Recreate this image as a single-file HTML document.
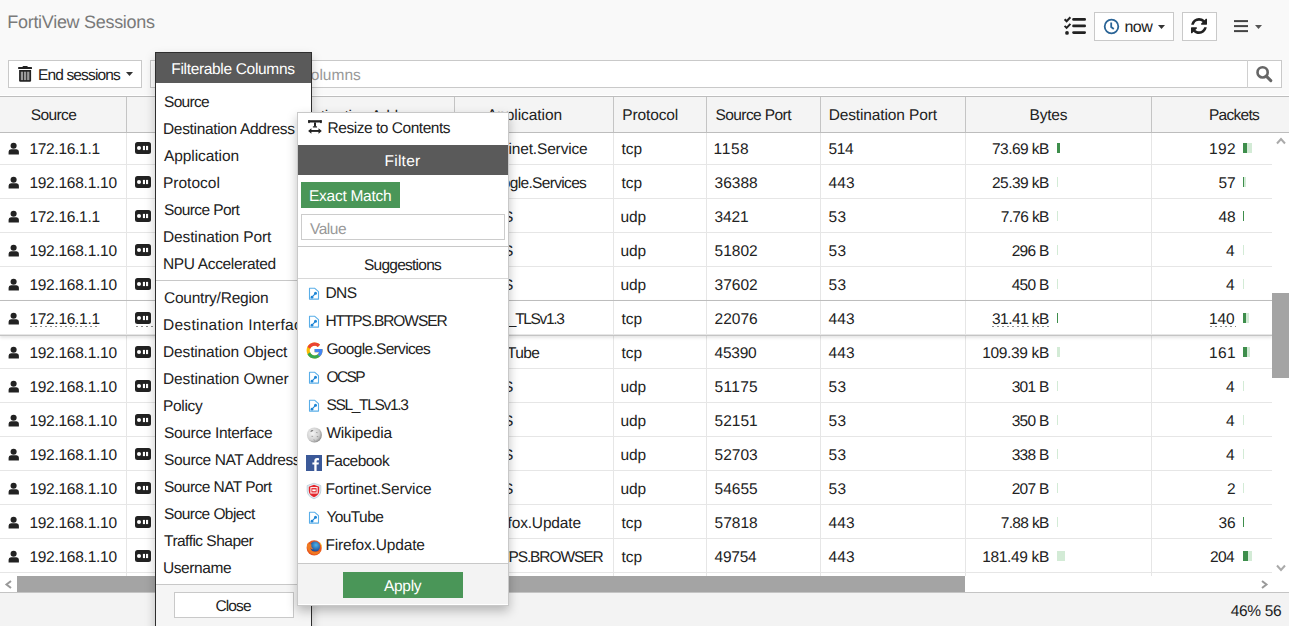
<!DOCTYPE html>
<html><head><meta charset="utf-8"><title>FortiView Sessions</title>
<style>
html,body{margin:0;padding:0;}
body{width:1289px;height:626px;overflow:hidden;position:relative;background:#f9f9f9;font-family:'Liberation Sans', sans-serif;text-rendering:geometricPrecision;}
.t{position:absolute;line-height:1;white-space:nowrap;}
.b{position:absolute;}
</style></head><body>
<div class="t" style="left:7.30px;top:13px;font-size:18px;color:#7a7a7a;letter-spacing:-0.296px;">FortiView Sessions</div>
<svg class="b" style="left:1060px;top:10px" width="30" height="28" viewBox="0 0 30 28">
<path d="M4.6 9.2 L6.6 11.2 L10.4 7.2" stroke="#222" stroke-width="2" fill="none"/>
<path d="M4.6 15.9 L6.6 17.9 L10.4 13.9" stroke="#222" stroke-width="2" fill="none"/>
<circle cx="7" cy="22.9" r="1.9" fill="#222"/>
<rect x="12.2" y="8.1" width="13.8" height="2.7" rx="1.3" fill="#222"/>
<rect x="12.2" y="14.6" width="13.8" height="2.7" rx="1.3" fill="#222"/>
<rect x="12.2" y="21.2" width="13.8" height="2.7" rx="1.3" fill="#222"/>
</svg>
<div class="b" style="left:1094px;top:12px;width:80px;height:29px;background:#fff;border:1px solid #c9c9c9;box-sizing:border-box"></div>
<svg class="b" style="left:1103.1px;top:17.8px" width="17" height="17" viewBox="0 0 17 17">
<circle cx="8.5" cy="8.5" r="6.8" stroke="#2a6496" stroke-width="1.8" fill="none"/>
<path d="M8.2 4.5 V9 L10.8 11" stroke="#2a6496" stroke-width="1.8" fill="none"/>
</svg>
<div class="t" style="left:1124.40px;top:20px;font-size:16px;color:#222;letter-spacing:-0.448px;">now</div>
<svg class="b" style="left:1158px;top:25px" width="8" height="5"><path d="M0 0 H7 L3.5 4Z" fill="#333"/></svg>
<div class="b" style="left:1182px;top:12px;width:35px;height:29px;background:#fff;border:1px solid #c9c9c9;box-sizing:border-box"></div>
<svg class="b" style="left:1191px;top:18px" width="16" height="16" viewBox="0 0 1536 1536">
<path fill="#222" d="M1511 928q0 5-1 7-64 268-268 434.5T764 1536q-146 0-282.5-55T238 1324l-129 129q-19 19-45 19t-45-19-19-45V960q0-26 19-45t45-19h448q26 0 45 19t19 45-19 45l-137 137q71 66 161 102t187 36q134 0 250-65t186-179q11-17 53-117 8-23 30-23h192q13 0 22.5 9.5t9.5 22.5zm25-800v448q0 26-19 45t-45 19h-448q-26 0-45-19t-19-45 19-45l138-138Q969 256 768 256q-134 0-250 65T332 500q-11 17-53 117-8 23-30 23H50q-13 0-22.5-9.5T18 608v-7q65-268 270-434.5T768 0q146 0 284 55.5T1297 212l130-129q19-19 45-19t45 19 19 45z"/>
</svg>
<svg class="b" style="left:1233px;top:20px" width="30" height="13" viewBox="0 0 30 13">
<rect x="1" y="0.1" width="14" height="2" fill="#444"/>
<rect x="1" y="5.1" width="14" height="2" fill="#444"/>
<rect x="1" y="10.1" width="14" height="2" fill="#444"/>
<path d="M22 5 H29 L25.5 9Z" fill="#555"/>
</svg>
<div class="b" style="left:8px;top:60px;width:134px;height:28px;background:#fff;border:1px solid #c9c9c9;box-sizing:border-box"></div>
<svg class="b" style="left:10px;top:60px" width="30" height="30" viewBox="0 0 30 30">
<rect x="8.1" y="7.1" width="13.9" height="1.9" rx="0.6" fill="#222"/>
<rect x="12.6" y="5.9" width="5.1" height="1.6" rx="0.7" fill="#222"/>
<path d="M9.1 10 H21.1 V20.6 Q21.1 21.8 19.9 21.8 H10.3 Q9.1 21.8 9.1 20.6 Z" fill="#222"/>
<rect x="10.8" y="11.7" width="2.3" height="8.4" fill="#9a9a9a"/>
<rect x="13.95" y="11.7" width="2.3" height="8.4" fill="#9a9a9a"/>
<rect x="17.1" y="11.7" width="2.3" height="8.4" fill="#9a9a9a"/>
</svg>
<div class="t" style="left:38.00px;top:68px;font-size:15.5px;color:#222;letter-spacing:-0.858px;">End sessions</div>
<svg class="b" style="left:126px;top:72px" width="8" height="5"><path d="M0 0 H7 L3.5 4Z" fill="#333"/></svg>
<div class="b" style="left:150px;top:60px;width:1132px;height:28px;background:#fff;border:1px solid #c9c9c9;box-sizing:border-box"></div>
<div class="b" style="left:1247px;top:60px;width:1px;height:28px;background:#d0d0d0"></div>
<div class="t" style="left:243.61px;top:68px;font-size:15.5px;color:#999;">Filter by columns</div>
<svg class="b" style="left:1255px;top:66px" width="18" height="17" viewBox="0 0 18 17">
<circle cx="7.6" cy="6.4" r="5.1" stroke="#666" stroke-width="2.6" fill="none"/>
<path d="M11.3 10.1 L15.8 14.6" stroke="#666" stroke-width="3" stroke-linecap="round"/>
</svg>
<div class="b" style="left:0px;top:95px;width:1289px;height:1px;background:#fff"></div>
<div class="b" style="left:0px;top:96px;width:1289px;height:37px;background:#f4f4f4;border-top:1px solid #bdbdbd;border-bottom:1px solid #bdbdbd;box-sizing:border-box"></div>
<div class="b" style="left:126px;top:97px;width:1px;height:35px;background:#c4c4c4"></div>
<div class="b" style="left:454px;top:97px;width:1px;height:35px;background:#c4c4c4"></div>
<div class="b" style="left:613px;top:97px;width:1px;height:35px;background:#c4c4c4"></div>
<div class="b" style="left:706px;top:97px;width:1px;height:35px;background:#c4c4c4"></div>
<div class="b" style="left:820px;top:97px;width:1px;height:35px;background:#c4c4c4"></div>
<div class="b" style="left:965px;top:97px;width:1px;height:35px;background:#c4c4c4"></div>
<div class="b" style="left:1151px;top:97px;width:1px;height:35px;background:#c4c4c4"></div>
<div class="t" style="left:30.70px;top:108px;font-size:15.5px;color:#222;letter-spacing:-0.598px;">Source</div>
<div class="t" style="left:294.20px;top:109px;font-size:15.5px;color:#222;letter-spacing:-0.331px;">Destination Address</div>
<div class="t" style="left:487.00px;top:108px;font-size:15.5px;color:#222;letter-spacing:-0.071px;">Application</div>
<div class="t" style="left:622.20px;top:108px;font-size:15.5px;color:#222;letter-spacing:-0.117px;">Protocol</div>
<div class="t" style="left:715.50px;top:108px;font-size:15.5px;color:#222;letter-spacing:-0.584px;">Source Port</div>
<div class="t" style="left:828.70px;top:108px;font-size:15.5px;color:#222;letter-spacing:-0.131px;">Destination Port</div>
<div class="t" style="left:1029.50px;top:108px;font-size:15.5px;color:#222;letter-spacing:-0.204px;">Bytes</div>
<div class="t" style="left:1209.00px;top:108px;font-size:15.5px;color:#222;letter-spacing:-0.731px;">Packets</div>
<div class="b" style="left:0px;top:133px;width:1272px;height:443px;background:#fff"></div>
<div class="b" style="left:0px;top:164px;width:1272px;height:1px;background:#e6e6e6"></div>
<svg class="b" style="left:8px;top:142px" width="12" height="13" viewBox="0 0 12 13">
<circle cx="5.6" cy="3.8" r="3.05" fill="#222"/><path d="M0.6 12.6 V9.8 Q0.6 7.3 3 7.3 H8.5 Q10.9 7.3 10.9 9.8 V12.6Z" fill="#222"/></svg>
<div class="t" style="left:29.40px;top:142px;font-size:15.5px;color:#222;letter-spacing:-0.293px;">172.16.1.1</div>
<svg class="b" style="left:135px;top:142px" width="16" height="12" viewBox="0 0 16 12">
<rect x="0" y="0" width="16" height="12" rx="2.5" fill="#222"/><circle cx="4" cy="6" r="2" fill="#fff"/><rect x="7.9" y="3.9" width="2.1" height="4.2" fill="#fff"/><rect x="11" y="3.9" width="2.1" height="4.2" fill="#fff"/></svg>
<div class="t" style="left:481.50px;top:142px;font-size:15.5px;color:#222;letter-spacing:-0.154px;">Fortinet.Service</div>
<div class="t" style="left:621.60px;top:142px;font-size:15.5px;color:#222;letter-spacing:-0.028px;">tcp</div>
<div class="t" style="left:713.60px;top:142px;font-size:15.5px;color:#222;letter-spacing:0.596px;">1158</div>
<div class="t" style="left:828.60px;top:142px;font-size:15.5px;color:#222;letter-spacing:-0.470px;">514</div>
<div class="t" style="left:992.00px;top:142px;font-size:15.5px;color:#222;letter-spacing:-0.549px;">73.69 kB</div>
<div class="t" style="left:1208.90px;top:142px;font-size:15.5px;color:#222;letter-spacing:0.430px;">192</div>
<div class="b" style="left:1057px;top:143px;width:3px;height:10px;background:#3e8e4c"></div>
<div class="b" style="left:1243px;top:143px;width:4px;height:10px;background:#3e8e4c"></div>
<div class="b" style="left:1247px;top:143px;width:5px;height:10px;background:#d3ebd6"></div>
<div class="b" style="left:0px;top:198px;width:1272px;height:1px;background:#e6e6e6"></div>
<svg class="b" style="left:8px;top:176px" width="12" height="13" viewBox="0 0 12 13">
<circle cx="5.6" cy="3.8" r="3.05" fill="#222"/><path d="M0.6 12.6 V9.8 Q0.6 7.3 3 7.3 H8.5 Q10.9 7.3 10.9 9.8 V12.6Z" fill="#222"/></svg>
<div class="t" style="left:29.40px;top:176px;font-size:15.5px;color:#222;letter-spacing:-0.262px;">192.168.1.10</div>
<svg class="b" style="left:135px;top:176px" width="16" height="12" viewBox="0 0 16 12">
<rect x="0" y="0" width="16" height="12" rx="2.5" fill="#222"/><circle cx="4" cy="6" r="2" fill="#fff"/><rect x="7.9" y="3.9" width="2.1" height="4.2" fill="#fff"/><rect x="11" y="3.9" width="2.1" height="4.2" fill="#fff"/></svg>
<div class="t" style="left:482.50px;top:176px;font-size:15.5px;color:#222;letter-spacing:-0.669px;">Google.Services</div>
<div class="t" style="left:621.60px;top:176px;font-size:15.5px;color:#222;letter-spacing:-0.028px;">tcp</div>
<div class="t" style="left:714.60px;top:176px;font-size:15.5px;color:#222;">36388</div>
<div class="t" style="left:828.60px;top:176px;font-size:15.5px;color:#222;letter-spacing:0.030px;">443</div>
<div class="t" style="left:992.00px;top:176px;font-size:15.5px;color:#222;letter-spacing:-0.549px;">25.39 kB</div>
<div class="t" style="left:1218.60px;top:176px;font-size:15.5px;color:#222;letter-spacing:-0.220px;">57</div>
<div class="b" style="left:1057px;top:177px;width:1px;height:10px;background:#d3ebd6"></div>
<div class="b" style="left:1243px;top:177px;width:1px;height:10px;background:#3e8e4c"></div>
<div class="b" style="left:1244px;top:177px;width:2px;height:10px;background:#d3ebd6"></div>
<div class="b" style="left:0px;top:232px;width:1272px;height:1px;background:#e6e6e6"></div>
<svg class="b" style="left:8px;top:210px" width="12" height="13" viewBox="0 0 12 13">
<circle cx="5.6" cy="3.8" r="3.05" fill="#222"/><path d="M0.6 12.6 V9.8 Q0.6 7.3 3 7.3 H8.5 Q10.9 7.3 10.9 9.8 V12.6Z" fill="#222"/></svg>
<div class="t" style="left:29.40px;top:210px;font-size:15.5px;color:#222;letter-spacing:-0.293px;">172.16.1.1</div>
<svg class="b" style="left:135px;top:210px" width="16" height="12" viewBox="0 0 16 12">
<rect x="0" y="0" width="16" height="12" rx="2.5" fill="#222"/><circle cx="4" cy="6" r="2" fill="#fff"/><rect x="7.9" y="3.9" width="2.1" height="4.2" fill="#fff"/><rect x="11" y="3.9" width="2.1" height="4.2" fill="#fff"/></svg>
<div class="t" style="left:481.50px;top:210px;font-size:15.5px;color:#222;letter-spacing:-0.494px;">DNS</div>
<div class="t" style="left:620.60px;top:210px;font-size:15.5px;color:#222;letter-spacing:-0.120px;">udp</div>
<div class="t" style="left:714.60px;top:210px;font-size:15.5px;color:#222;letter-spacing:-0.120px;">3421</div>
<div class="t" style="left:828.60px;top:210px;font-size:15.5px;color:#222;letter-spacing:0.380px;">53</div>
<div class="t" style="left:1000.70px;top:210px;font-size:15.5px;color:#222;letter-spacing:-0.654px;">7.76 kB</div>
<div class="t" style="left:1218.60px;top:210px;font-size:15.5px;color:#222;letter-spacing:-0.220px;">48</div>
<div class="b" style="left:1057px;top:211px;width:1px;height:10px;background:#d3ebd6"></div>
<div class="b" style="left:1243px;top:211px;width:1px;height:10px;background:#3e8e4c"></div>
<div class="b" style="left:0px;top:266px;width:1272px;height:1px;background:#e6e6e6"></div>
<svg class="b" style="left:8px;top:244px" width="12" height="13" viewBox="0 0 12 13">
<circle cx="5.6" cy="3.8" r="3.05" fill="#222"/><path d="M0.6 12.6 V9.8 Q0.6 7.3 3 7.3 H8.5 Q10.9 7.3 10.9 9.8 V12.6Z" fill="#222"/></svg>
<div class="t" style="left:29.40px;top:244px;font-size:15.5px;color:#222;letter-spacing:-0.262px;">192.168.1.10</div>
<svg class="b" style="left:135px;top:244px" width="16" height="12" viewBox="0 0 16 12">
<rect x="0" y="0" width="16" height="12" rx="2.5" fill="#222"/><circle cx="4" cy="6" r="2" fill="#fff"/><rect x="7.9" y="3.9" width="2.1" height="4.2" fill="#fff"/><rect x="11" y="3.9" width="2.1" height="4.2" fill="#fff"/></svg>
<div class="t" style="left:481.50px;top:244px;font-size:15.5px;color:#222;letter-spacing:-0.494px;">DNS</div>
<div class="t" style="left:620.60px;top:244px;font-size:15.5px;color:#222;letter-spacing:-0.120px;">udp</div>
<div class="t" style="left:714.60px;top:244px;font-size:15.5px;color:#222;">51802</div>
<div class="t" style="left:828.60px;top:244px;font-size:15.5px;color:#222;letter-spacing:0.380px;">53</div>
<div class="t" style="left:1011.70px;top:244px;font-size:15.5px;color:#222;letter-spacing:-0.717px;">296 B</div>
<div class="t" style="left:1226.00px;top:244px;font-size:15.5px;color:#222;">4</div>
<div class="b" style="left:1057px;top:245px;width:1px;height:10px;background:#d3ebd6"></div>
<div class="b" style="left:1243px;top:245px;width:1px;height:10px;background:#d3ebd6"></div>
<div class="b" style="left:0px;top:300px;width:1272px;height:1px;background:#e6e6e6"></div>
<svg class="b" style="left:8px;top:278px" width="12" height="13" viewBox="0 0 12 13">
<circle cx="5.6" cy="3.8" r="3.05" fill="#222"/><path d="M0.6 12.6 V9.8 Q0.6 7.3 3 7.3 H8.5 Q10.9 7.3 10.9 9.8 V12.6Z" fill="#222"/></svg>
<div class="t" style="left:29.40px;top:278px;font-size:15.5px;color:#222;letter-spacing:-0.262px;">192.168.1.10</div>
<svg class="b" style="left:135px;top:278px" width="16" height="12" viewBox="0 0 16 12">
<rect x="0" y="0" width="16" height="12" rx="2.5" fill="#222"/><circle cx="4" cy="6" r="2" fill="#fff"/><rect x="7.9" y="3.9" width="2.1" height="4.2" fill="#fff"/><rect x="11" y="3.9" width="2.1" height="4.2" fill="#fff"/></svg>
<div class="t" style="left:481.50px;top:278px;font-size:15.5px;color:#222;letter-spacing:-0.494px;">DNS</div>
<div class="t" style="left:620.60px;top:278px;font-size:15.5px;color:#222;letter-spacing:-0.120px;">udp</div>
<div class="t" style="left:714.60px;top:278px;font-size:15.5px;color:#222;">37602</div>
<div class="t" style="left:828.60px;top:278px;font-size:15.5px;color:#222;letter-spacing:0.380px;">53</div>
<div class="t" style="left:1011.70px;top:278px;font-size:15.5px;color:#222;letter-spacing:-0.717px;">450 B</div>
<div class="t" style="left:1226.00px;top:278px;font-size:15.5px;color:#222;">4</div>
<div class="b" style="left:1057px;top:279px;width:1px;height:10px;background:#d3ebd6"></div>
<div class="b" style="left:1243px;top:279px;width:1px;height:10px;background:#d3ebd6"></div>
<div class="b" style="left:0px;top:334px;width:1272px;height:1px;background:#e6e6e6"></div>
<svg class="b" style="left:8px;top:312px" width="12" height="13" viewBox="0 0 12 13">
<circle cx="5.6" cy="3.8" r="3.05" fill="#222"/><path d="M0.6 12.6 V9.8 Q0.6 7.3 3 7.3 H8.5 Q10.9 7.3 10.9 9.8 V12.6Z" fill="#222"/></svg>
<div class="t" style="left:29.40px;top:312px;font-size:15.5px;color:#222;letter-spacing:-0.293px;">172.16.1.1</div>
<svg class="b" style="left:135px;top:312px" width="16" height="12" viewBox="0 0 16 12">
<rect x="0" y="0" width="16" height="12" rx="2.5" fill="#222"/><circle cx="4" cy="6" r="2" fill="#fff"/><rect x="7.9" y="3.9" width="2.1" height="4.2" fill="#fff"/><rect x="11" y="3.9" width="2.1" height="4.2" fill="#fff"/></svg>
<div class="t" style="left:482.50px;top:312px;font-size:15.5px;color:#222;letter-spacing:-1.322px;">SSL_TLSv1.3</div>
<div class="t" style="left:621.60px;top:312px;font-size:15.5px;color:#222;letter-spacing:-0.028px;">tcp</div>
<div class="t" style="left:714.60px;top:312px;font-size:15.5px;color:#222;">22076</div>
<div class="t" style="left:828.60px;top:312px;font-size:15.5px;color:#222;letter-spacing:0.030px;">443</div>
<div class="t" style="left:992.00px;top:312px;font-size:15.5px;color:#222;letter-spacing:-0.549px;">31.41 kB</div>
<div class="t" style="left:1208.90px;top:312px;font-size:15.5px;color:#222;letter-spacing:-0.070px;">140</div>
<div class="b" style="left:30px;top:326px;width:70px;height:1px;background:repeating-linear-gradient(90deg,#8a8a8a 0 2px,transparent 2px 5px)"></div>
<div class="b" style="left:136px;top:326px;width:19px;height:1px;background:repeating-linear-gradient(90deg,#8a8a8a 0 2px,transparent 2px 5px)"></div>
<div class="b" style="left:992px;top:326px;width:58px;height:1px;background:repeating-linear-gradient(90deg,#8a8a8a 0 2px,transparent 2px 5px)"></div>
<div class="b" style="left:1210px;top:326px;width:26px;height:1px;background:repeating-linear-gradient(90deg,#8a8a8a 0 2px,transparent 2px 5px)"></div>
<div class="b" style="left:1057px;top:313px;width:1px;height:10px;background:#3e8e4c"></div>
<div class="b" style="left:1243px;top:313px;width:3px;height:10px;background:#3e8e4c"></div>
<div class="b" style="left:1246px;top:313px;width:3px;height:10px;background:#d3ebd6"></div>
<div class="b" style="left:0px;top:368px;width:1272px;height:1px;background:#e6e6e6"></div>
<svg class="b" style="left:8px;top:346px" width="12" height="13" viewBox="0 0 12 13">
<circle cx="5.6" cy="3.8" r="3.05" fill="#222"/><path d="M0.6 12.6 V9.8 Q0.6 7.3 3 7.3 H8.5 Q10.9 7.3 10.9 9.8 V12.6Z" fill="#222"/></svg>
<div class="t" style="left:29.40px;top:346px;font-size:15.5px;color:#222;letter-spacing:-0.262px;">192.168.1.10</div>
<svg class="b" style="left:135px;top:346px" width="16" height="12" viewBox="0 0 16 12">
<rect x="0" y="0" width="16" height="12" rx="2.5" fill="#222"/><circle cx="4" cy="6" r="2" fill="#fff"/><rect x="7.9" y="3.9" width="2.1" height="4.2" fill="#fff"/><rect x="11" y="3.9" width="2.1" height="4.2" fill="#fff"/></svg>
<div class="t" style="left:482.50px;top:346px;font-size:15.5px;color:#222;letter-spacing:-0.582px;">YouTube</div>
<div class="t" style="left:621.60px;top:346px;font-size:15.5px;color:#222;letter-spacing:-0.028px;">tcp</div>
<div class="t" style="left:714.60px;top:346px;font-size:15.5px;color:#222;letter-spacing:-0.245px;">45390</div>
<div class="t" style="left:828.60px;top:346px;font-size:15.5px;color:#222;letter-spacing:0.030px;">443</div>
<div class="t" style="left:982.30px;top:346px;font-size:15.5px;color:#222;letter-spacing:-0.346px;">109.39 kB</div>
<div class="t" style="left:1208.90px;top:346px;font-size:15.5px;color:#222;letter-spacing:0.430px;">161</div>
<div class="b" style="left:1057px;top:347px;width:3px;height:10px;background:#d3ebd6"></div>
<div class="b" style="left:1243px;top:347px;width:4px;height:10px;background:#3e8e4c"></div>
<div class="b" style="left:1247px;top:347px;width:3px;height:10px;background:#d3ebd6"></div>
<div class="b" style="left:0px;top:402px;width:1272px;height:1px;background:#e6e6e6"></div>
<svg class="b" style="left:8px;top:380px" width="12" height="13" viewBox="0 0 12 13">
<circle cx="5.6" cy="3.8" r="3.05" fill="#222"/><path d="M0.6 12.6 V9.8 Q0.6 7.3 3 7.3 H8.5 Q10.9 7.3 10.9 9.8 V12.6Z" fill="#222"/></svg>
<div class="t" style="left:29.40px;top:380px;font-size:15.5px;color:#222;letter-spacing:-0.262px;">192.168.1.10</div>
<svg class="b" style="left:135px;top:380px" width="16" height="12" viewBox="0 0 16 12">
<rect x="0" y="0" width="16" height="12" rx="2.5" fill="#222"/><circle cx="4" cy="6" r="2" fill="#fff"/><rect x="7.9" y="3.9" width="2.1" height="4.2" fill="#fff"/><rect x="11" y="3.9" width="2.1" height="4.2" fill="#fff"/></svg>
<div class="t" style="left:481.50px;top:380px;font-size:15.5px;color:#222;letter-spacing:-0.494px;">DNS</div>
<div class="t" style="left:620.60px;top:380px;font-size:15.5px;color:#222;letter-spacing:-0.120px;">udp</div>
<div class="t" style="left:714.60px;top:380px;font-size:15.5px;color:#222;letter-spacing:0.292px;">51175</div>
<div class="t" style="left:828.60px;top:380px;font-size:15.5px;color:#222;letter-spacing:0.380px;">53</div>
<div class="t" style="left:1011.70px;top:380px;font-size:15.5px;color:#222;letter-spacing:-0.717px;">301 B</div>
<div class="t" style="left:1226.00px;top:380px;font-size:15.5px;color:#222;">4</div>
<div class="b" style="left:1057px;top:381px;width:1px;height:10px;background:#d3ebd6"></div>
<div class="b" style="left:1243px;top:381px;width:1px;height:10px;background:#d3ebd6"></div>
<div class="b" style="left:0px;top:436px;width:1272px;height:1px;background:#e6e6e6"></div>
<svg class="b" style="left:8px;top:414px" width="12" height="13" viewBox="0 0 12 13">
<circle cx="5.6" cy="3.8" r="3.05" fill="#222"/><path d="M0.6 12.6 V9.8 Q0.6 7.3 3 7.3 H8.5 Q10.9 7.3 10.9 9.8 V12.6Z" fill="#222"/></svg>
<div class="t" style="left:29.40px;top:414px;font-size:15.5px;color:#222;letter-spacing:-0.262px;">192.168.1.10</div>
<svg class="b" style="left:135px;top:414px" width="16" height="12" viewBox="0 0 16 12">
<rect x="0" y="0" width="16" height="12" rx="2.5" fill="#222"/><circle cx="4" cy="6" r="2" fill="#fff"/><rect x="7.9" y="3.9" width="2.1" height="4.2" fill="#fff"/><rect x="11" y="3.9" width="2.1" height="4.2" fill="#fff"/></svg>
<div class="t" style="left:481.50px;top:414px;font-size:15.5px;color:#222;letter-spacing:-0.494px;">DNS</div>
<div class="t" style="left:620.60px;top:414px;font-size:15.5px;color:#222;letter-spacing:-0.120px;">udp</div>
<div class="t" style="left:714.60px;top:414px;font-size:15.5px;color:#222;">52151</div>
<div class="t" style="left:828.60px;top:414px;font-size:15.5px;color:#222;letter-spacing:0.380px;">53</div>
<div class="t" style="left:1011.70px;top:414px;font-size:15.5px;color:#222;letter-spacing:-0.717px;">350 B</div>
<div class="t" style="left:1226.00px;top:414px;font-size:15.5px;color:#222;">4</div>
<div class="b" style="left:1057px;top:415px;width:1px;height:10px;background:#d3ebd6"></div>
<div class="b" style="left:1243px;top:415px;width:1px;height:10px;background:#d3ebd6"></div>
<div class="b" style="left:0px;top:470px;width:1272px;height:1px;background:#e6e6e6"></div>
<svg class="b" style="left:8px;top:448px" width="12" height="13" viewBox="0 0 12 13">
<circle cx="5.6" cy="3.8" r="3.05" fill="#222"/><path d="M0.6 12.6 V9.8 Q0.6 7.3 3 7.3 H8.5 Q10.9 7.3 10.9 9.8 V12.6Z" fill="#222"/></svg>
<div class="t" style="left:29.40px;top:448px;font-size:15.5px;color:#222;letter-spacing:-0.262px;">192.168.1.10</div>
<svg class="b" style="left:135px;top:448px" width="16" height="12" viewBox="0 0 16 12">
<rect x="0" y="0" width="16" height="12" rx="2.5" fill="#222"/><circle cx="4" cy="6" r="2" fill="#fff"/><rect x="7.9" y="3.9" width="2.1" height="4.2" fill="#fff"/><rect x="11" y="3.9" width="2.1" height="4.2" fill="#fff"/></svg>
<div class="t" style="left:481.50px;top:448px;font-size:15.5px;color:#222;letter-spacing:-0.494px;">DNS</div>
<div class="t" style="left:620.60px;top:448px;font-size:15.5px;color:#222;letter-spacing:-0.120px;">udp</div>
<div class="t" style="left:714.60px;top:448px;font-size:15.5px;color:#222;">52703</div>
<div class="t" style="left:828.60px;top:448px;font-size:15.5px;color:#222;letter-spacing:0.380px;">53</div>
<div class="t" style="left:1011.70px;top:448px;font-size:15.5px;color:#222;letter-spacing:-0.717px;">338 B</div>
<div class="t" style="left:1226.00px;top:448px;font-size:15.5px;color:#222;">4</div>
<div class="b" style="left:1057px;top:449px;width:1px;height:10px;background:#d3ebd6"></div>
<div class="b" style="left:1243px;top:449px;width:1px;height:10px;background:#d3ebd6"></div>
<div class="b" style="left:0px;top:504px;width:1272px;height:1px;background:#e6e6e6"></div>
<svg class="b" style="left:8px;top:482px" width="12" height="13" viewBox="0 0 12 13">
<circle cx="5.6" cy="3.8" r="3.05" fill="#222"/><path d="M0.6 12.6 V9.8 Q0.6 7.3 3 7.3 H8.5 Q10.9 7.3 10.9 9.8 V12.6Z" fill="#222"/></svg>
<div class="t" style="left:29.40px;top:482px;font-size:15.5px;color:#222;letter-spacing:-0.262px;">192.168.1.10</div>
<svg class="b" style="left:135px;top:482px" width="16" height="12" viewBox="0 0 16 12">
<rect x="0" y="0" width="16" height="12" rx="2.5" fill="#222"/><circle cx="4" cy="6" r="2" fill="#fff"/><rect x="7.9" y="3.9" width="2.1" height="4.2" fill="#fff"/><rect x="11" y="3.9" width="2.1" height="4.2" fill="#fff"/></svg>
<div class="t" style="left:481.50px;top:482px;font-size:15.5px;color:#222;letter-spacing:-0.494px;">DNS</div>
<div class="t" style="left:620.60px;top:482px;font-size:15.5px;color:#222;letter-spacing:-0.120px;">udp</div>
<div class="t" style="left:714.60px;top:482px;font-size:15.5px;color:#222;">54655</div>
<div class="t" style="left:828.60px;top:482px;font-size:15.5px;color:#222;letter-spacing:0.380px;">53</div>
<div class="t" style="left:1011.70px;top:482px;font-size:15.5px;color:#222;letter-spacing:-0.717px;">207 B</div>
<div class="t" style="left:1227.00px;top:482px;font-size:15.5px;color:#222;">2</div>
<div class="b" style="left:1057px;top:483px;width:1px;height:10px;background:#d3ebd6"></div>
<div class="b" style="left:1243px;top:483px;width:1px;height:10px;background:#d3ebd6"></div>
<div class="b" style="left:0px;top:538px;width:1272px;height:1px;background:#e6e6e6"></div>
<svg class="b" style="left:8px;top:516px" width="12" height="13" viewBox="0 0 12 13">
<circle cx="5.6" cy="3.8" r="3.05" fill="#222"/><path d="M0.6 12.6 V9.8 Q0.6 7.3 3 7.3 H8.5 Q10.9 7.3 10.9 9.8 V12.6Z" fill="#222"/></svg>
<div class="t" style="left:29.40px;top:516px;font-size:15.5px;color:#222;letter-spacing:-0.262px;">192.168.1.10</div>
<svg class="b" style="left:135px;top:516px" width="16" height="12" viewBox="0 0 16 12">
<rect x="0" y="0" width="16" height="12" rx="2.5" fill="#222"/><circle cx="4" cy="6" r="2" fill="#fff"/><rect x="7.9" y="3.9" width="2.1" height="4.2" fill="#fff"/><rect x="11" y="3.9" width="2.1" height="4.2" fill="#fff"/></svg>
<div class="t" style="left:481.50px;top:516px;font-size:15.5px;color:#222;letter-spacing:-0.164px;">Firefox.Update</div>
<div class="t" style="left:621.60px;top:516px;font-size:15.5px;color:#222;letter-spacing:-0.028px;">tcp</div>
<div class="t" style="left:714.60px;top:516px;font-size:15.5px;color:#222;">57818</div>
<div class="t" style="left:828.60px;top:516px;font-size:15.5px;color:#222;letter-spacing:0.030px;">443</div>
<div class="t" style="left:1000.70px;top:516px;font-size:15.5px;color:#222;letter-spacing:-0.654px;">7.88 kB</div>
<div class="t" style="left:1218.60px;top:516px;font-size:15.5px;color:#222;letter-spacing:-0.220px;">36</div>
<div class="b" style="left:1057px;top:517px;width:1px;height:10px;background:#d3ebd6"></div>
<div class="b" style="left:1243px;top:517px;width:1px;height:10px;background:#3e8e4c"></div>
<div class="b" style="left:0px;top:572px;width:1272px;height:1px;background:#e6e6e6"></div>
<svg class="b" style="left:8px;top:550px" width="12" height="13" viewBox="0 0 12 13">
<circle cx="5.6" cy="3.8" r="3.05" fill="#222"/><path d="M0.6 12.6 V9.8 Q0.6 7.3 3 7.3 H8.5 Q10.9 7.3 10.9 9.8 V12.6Z" fill="#222"/></svg>
<div class="t" style="left:29.40px;top:550px;font-size:15.5px;color:#222;letter-spacing:-0.262px;">192.168.1.10</div>
<svg class="b" style="left:135px;top:550px" width="16" height="12" viewBox="0 0 16 12">
<rect x="0" y="0" width="16" height="12" rx="2.5" fill="#222"/><circle cx="4" cy="6" r="2" fill="#fff"/><rect x="7.9" y="3.9" width="2.1" height="4.2" fill="#fff"/><rect x="11" y="3.9" width="2.1" height="4.2" fill="#fff"/></svg>
<div class="t" style="left:481.50px;top:550px;font-size:15.5px;color:#222;letter-spacing:-1.084px;">HTTPS.BROWSER</div>
<div class="t" style="left:621.60px;top:550px;font-size:15.5px;color:#222;letter-spacing:-0.028px;">tcp</div>
<div class="t" style="left:714.60px;top:550px;font-size:15.5px;color:#222;letter-spacing:-0.245px;">49754</div>
<div class="t" style="left:828.60px;top:550px;font-size:15.5px;color:#222;letter-spacing:0.030px;">443</div>
<div class="t" style="left:982.30px;top:550px;font-size:15.5px;color:#222;letter-spacing:-0.346px;">181.49 kB</div>
<div class="t" style="left:1209.90px;top:550px;font-size:15.5px;color:#222;letter-spacing:-0.570px;">204</div>
<div class="b" style="left:1057px;top:551px;width:8px;height:10px;background:#d3ebd6"></div>
<div class="b" style="left:1243px;top:551px;width:5px;height:10px;background:#3e8e4c"></div>
<div class="b" style="left:1248px;top:551px;width:4px;height:10px;background:#d3ebd6"></div>
<div class="b" style="left:126px;top:133px;width:1px;height:443px;background:#e6e6e6"></div>
<div class="b" style="left:454px;top:133px;width:1px;height:443px;background:#e6e6e6"></div>
<div class="b" style="left:613px;top:133px;width:1px;height:443px;background:#e6e6e6"></div>
<div class="b" style="left:706px;top:133px;width:1px;height:443px;background:#e6e6e6"></div>
<div class="b" style="left:820px;top:133px;width:1px;height:443px;background:#e6e6e6"></div>
<div class="b" style="left:965px;top:133px;width:1px;height:443px;background:#e6e6e6"></div>
<div class="b" style="left:1151px;top:133px;width:1px;height:443px;background:#e6e6e6"></div>
<div class="b" style="left:0px;top:300px;width:1272px;height:36px;border-top:1px solid #bdbdbd;border-bottom:1px solid #c4c4c4;box-shadow:0 2px 3px rgba(0,0,0,0.10);box-sizing:border-box"></div>
<div class="b" style="left:0px;top:576px;width:1272px;height:16px;background:#fff"></div>
<div class="b" style="left:17px;top:576px;width:948px;height:16px;background:#a4a4a4"></div>
<svg class="b" style="left:4px;top:580px" width="9" height="9"><path d="M7 1 L2.5 4.5 L7 8" stroke="#999" stroke-width="2" fill="none"/></svg>
<svg class="b" style="left:1260px;top:580px" width="9" height="9"><path d="M2 1 L6.5 4.5 L2 8" stroke="#999" stroke-width="2" fill="none"/></svg>
<div class="b" style="left:1272px;top:133px;width:17px;height:459px;background:#fff"></div>
<div class="b" style="left:1272px;top:293px;width:17px;height:85px;background:#a4a4a4"></div>
<svg class="b" style="left:1276px;top:137px" width="10" height="8"><path d="M1 6.5 L5 2 L9 6.5" stroke="#aaa" stroke-width="2" fill="none"/></svg>
<svg class="b" style="left:1276px;top:564px" width="10" height="8"><path d="M1 1.5 L5 6 L9 1.5" stroke="#aaa" stroke-width="2" fill="none"/></svg>
<div class="b" style="left:0px;top:592px;width:1289px;height:34px;background:#f3f3f3;border-top:1px solid #c4c4c4;box-sizing:border-box"></div>
<div class="t" style="left:1230.70px;top:604px;font-size:15.5px;color:#222;letter-spacing:-0.330px;">46% 56</div>
<div class="b" style="left:155px;top:52px;width:157px;height:590px;background:#fff;border:1px solid #2e2e2e;box-sizing:border-box;box-shadow:0 5px 10px rgba(0,0,0,0.22)"></div>
<div class="b" style="left:156px;top:53px;width:155px;height:30px;background:#5a5a5a"></div>
<div class="t" style="left:171.30px;top:62px;font-size:15.5px;color:#fff;letter-spacing:-0.327px;">Filterable Columns</div>
<div class="t" style="left:164.00px;top:95px;font-size:15.5px;color:#222;letter-spacing:-0.698px;">Source</div>
<div class="t" style="left:163.00px;top:122px;font-size:15.5px;color:#222;letter-spacing:-0.331px;">Destination Address</div>
<div class="t" style="left:164.00px;top:149px;font-size:15.5px;color:#222;letter-spacing:-0.071px;">Application</div>
<div class="t" style="left:163.00px;top:176px;font-size:15.5px;color:#222;">Protocol</div>
<div class="t" style="left:164.00px;top:203px;font-size:15.5px;color:#222;letter-spacing:-0.594px;">Source Port</div>
<div class="t" style="left:163.00px;top:230px;font-size:15.5px;color:#222;letter-spacing:-0.131px;">Destination Port</div>
<div class="t" style="left:163.00px;top:257px;font-size:15.5px;color:#222;letter-spacing:-0.347px;">NPU Accelerated</div>
<div class="b" style="left:156px;top:280px;width:155px;height:1px;background:#c8c8c8"></div>
<div class="t" style="left:164.00px;top:291.4px;font-size:15.5px;color:#222;letter-spacing:-0.237px;">Country/Region</div>
<div class="t" style="left:163.00px;top:318.4px;font-size:15.5px;color:#222;letter-spacing:0.273px;">Destination Interface</div>
<div class="t" style="left:163.00px;top:345.4px;font-size:15.5px;color:#222;letter-spacing:-0.138px;">Destination Object</div>
<div class="t" style="left:163.00px;top:372.4px;font-size:15.5px;color:#222;letter-spacing:-0.109px;">Destination Owner</div>
<div class="t" style="left:163.00px;top:399.4px;font-size:15.5px;color:#222;letter-spacing:-0.319px;">Policy</div>
<div class="t" style="left:164.00px;top:426.4px;font-size:15.5px;color:#222;letter-spacing:-0.341px;">Source Interface</div>
<div class="t" style="left:164.00px;top:453.4px;font-size:15.5px;color:#222;letter-spacing:-0.393px;">Source NAT Address</div>
<div class="t" style="left:164.00px;top:480.4px;font-size:15.5px;color:#222;letter-spacing:-0.550px;">Source NAT Port</div>
<div class="t" style="left:164.00px;top:507.4px;font-size:15.5px;color:#222;letter-spacing:-0.576px;">Source Object</div>
<div class="t" style="left:164.00px;top:534.4px;font-size:15.5px;color:#222;letter-spacing:-0.517px;">Traffic Shaper</div>
<div class="t" style="left:163.00px;top:561.4px;font-size:15.5px;color:#222;letter-spacing:-0.411px;">Username</div>
<div class="b" style="left:156px;top:584px;width:155px;height:42px;background:#f5f5f5;border-top:1px solid #c8c8c8;box-sizing:border-box"></div>
<div class="b" style="left:174px;top:592px;width:120px;height:26px;background:#fff;border:1px solid #c9c9c9;box-sizing:border-box"></div>
<div class="t" style="left:215.40px;top:599px;font-size:15.5px;color:#222;letter-spacing:-0.852px;">Close</div>
<div class="b" style="left:297px;top:112px;width:212px;height:494px;background:#fff;border:1px solid #c8c8c8;box-sizing:border-box;box-shadow:0 5px 10px rgba(0,0,0,0.25)"></div>
<svg class="b" style="left:302px;top:114px" width="30" height="26" viewBox="0 0 30 26">
<rect x="6.2" y="6.2" width="13.5" height="2.3" fill="#222"/>
<rect x="6.2" y="6.2" width="1.6" height="2.9" fill="#222"/>
<rect x="18.1" y="6.2" width="1.6" height="2.9" fill="#222"/>
<rect x="12" y="8.4" width="2" height="4.2" fill="#222"/>
<rect x="10.8" y="12.2" width="4.3" height="1.4" rx="0.6" fill="#222"/>
<rect x="8" y="16" width="10" height="1.9" fill="#222"/>
<path d="M6.1 16.95 L9.4 14.2 V19.7Z M19.8 16.95 L16.5 14.2 V19.7Z" fill="#222"/>
</svg>
<div class="t" style="left:327.50px;top:121px;font-size:15.5px;color:#222;letter-spacing:-0.465px;">Resize to Contents</div>
<div class="b" style="left:298px;top:145px;width:210px;height:30px;background:#5a5a5a"></div>
<div class="t" style="left:384.50px;top:154px;font-size:15.5px;color:#fff;letter-spacing:0.244px;">Filter</div>
<div class="b" style="left:301px;top:182px;width:99px;height:26px;background:#4a9658"></div>
<div class="t" style="left:309.00px;top:189px;font-size:15.5px;color:#fff;letter-spacing:-0.266px;">Exact Match</div>
<div class="b" style="left:301px;top:214px;width:204px;height:26px;background:#fff;border:1px solid #ccc;box-sizing:border-box"></div>
<div class="t" style="left:310.00px;top:221.5px;font-size:15.5px;color:#999;letter-spacing:-0.468px;">Value</div>
<div class="b" style="left:298px;top:246px;width:210px;height:1px;background:#c8c8c8"></div>
<div class="t" style="left:364.00px;top:258px;font-size:15.5px;color:#222;letter-spacing:-0.756px;">Suggestions</div>
<div class="b" style="left:298px;top:278px;width:210px;height:1px;background:#d8d8d8"></div>
<div class="t" style="left:325.40px;top:286px;font-size:15.5px;color:#222;letter-spacing:-0.494px;">DNS</div>
<svg class="b" style="left:304px;top:285px" width="20" height="20" viewBox="0 0 20 20">
<path d="M5.5 3.3 H10.8 L14.5 6.6 V14.1 H5.5Z" fill="#fff" stroke="#5aaee8" stroke-width="1.1" stroke-linejoin="round"/>
<path d="M8 12.2 L11.5 8.4" stroke="#1f86d6" stroke-width="1.1"/>
<circle cx="8" cy="12.2" r="1.35" fill="#1f86d6"/><circle cx="11.5" cy="8.3" r="1.5" fill="#1f86d6"/>
</svg>
<div class="t" style="left:325.40px;top:314px;font-size:15.5px;color:#222;letter-spacing:-1.084px;">HTTPS.BROWSER</div>
<svg class="b" style="left:304px;top:313px" width="20" height="20" viewBox="0 0 20 20">
<path d="M5.5 3.3 H10.8 L14.5 6.6 V14.1 H5.5Z" fill="#fff" stroke="#5aaee8" stroke-width="1.1" stroke-linejoin="round"/>
<path d="M8 12.2 L11.5 8.4" stroke="#1f86d6" stroke-width="1.1"/>
<circle cx="8" cy="12.2" r="1.35" fill="#1f86d6"/><circle cx="11.5" cy="8.3" r="1.5" fill="#1f86d6"/>
</svg>
<div class="t" style="left:326.40px;top:342px;font-size:15.5px;color:#222;letter-spacing:-0.669px;">Google.Services</div>
<svg class="b" style="left:304.5px;top:340.8px" width="19.2" height="19.2" viewBox="0 0 48 48">
<path d="M43.6 20.1H42V20H24v8h11.3C33.7 32.7 29.2 36 24 36c-6.6 0-12-5.4-12-12s5.4-12 12-12c3.1 0 5.8 1.2 7.9 3.1l5.7-5.7C34 6.1 29.3 4 24 4 12.9 4 4 12.9 4 24s8.9 20 20 20 20-8.9 20-20c0-1.3-.1-2.6-.4-3.9z" fill="#FBBC05"/>
<path d="M6.3 14.7l6.6 4.8C14.7 15.1 19 12 24 12c3.1 0 5.8 1.2 7.9 3.1l5.7-5.7C34 6.1 29.3 4 24 4 16.3 4 9.7 8.3 6.3 14.7z" fill="#EA4335"/>
<path d="M24 44c5.2 0 9.9-2 13.4-5.2l-6.2-5.2C29.2 35.1 26.7 36 24 36c-5.2 0-9.6-3.3-11.3-8l-6.5 5C9.5 39.6 16.2 44 24 44z" fill="#34A853"/>
<path d="M43.6 20.1H42V20H24v8h11.3c-.8 2.2-2.2 4.2-4.1 5.6l6.2 5.2C37 39.2 44 34 44 24c0-1.3-.1-2.6-.4-3.9z" fill="#4285F4"/>
</svg>
<div class="t" style="left:326.40px;top:370px;font-size:15.5px;color:#222;letter-spacing:-1.563px;">OCSP</div>
<svg class="b" style="left:304px;top:369px" width="20" height="20" viewBox="0 0 20 20">
<path d="M5.5 3.3 H10.8 L14.5 6.6 V14.1 H5.5Z" fill="#fff" stroke="#5aaee8" stroke-width="1.1" stroke-linejoin="round"/>
<path d="M8 12.2 L11.5 8.4" stroke="#1f86d6" stroke-width="1.1"/>
<circle cx="8" cy="12.2" r="1.35" fill="#1f86d6"/><circle cx="11.5" cy="8.3" r="1.5" fill="#1f86d6"/>
</svg>
<div class="t" style="left:326.40px;top:398px;font-size:15.5px;color:#222;letter-spacing:-1.322px;">SSL_TLSv1.3</div>
<svg class="b" style="left:304px;top:397px" width="20" height="20" viewBox="0 0 20 20">
<path d="M5.5 3.3 H10.8 L14.5 6.6 V14.1 H5.5Z" fill="#fff" stroke="#5aaee8" stroke-width="1.1" stroke-linejoin="round"/>
<path d="M8 12.2 L11.5 8.4" stroke="#1f86d6" stroke-width="1.1"/>
<circle cx="8" cy="12.2" r="1.35" fill="#1f86d6"/><circle cx="11.5" cy="8.3" r="1.5" fill="#1f86d6"/>
</svg>
<div class="t" style="left:326.40px;top:426px;font-size:15.5px;color:#222;letter-spacing:-0.196px;">Wikipedia</div>
<svg class="b" style="left:304px;top:425px" width="20" height="20" viewBox="0 0 20 20">
<defs><radialGradient id="wg" cx="0.38" cy="0.4" r="0.65"><stop offset="0" stop-color="#f4f4f4"/><stop offset="0.7" stop-color="#cfcfcf"/><stop offset="1" stop-color="#8a8a8a"/></radialGradient></defs>
<circle cx="10.4" cy="9.9" r="7.5" fill="url(#wg)"/>
<path d="M6.3 6.5 Q7.5 4 9.5 5.6 Q8 7.2 6.3 6.5Z" fill="#6d6d6d"/>
<path d="M11.8 7 Q13.3 6.6 13.8 8 Q12.4 8.6 11.8 7Z M7.2 11 Q8.6 10.4 9.4 11.6 Q8 12.3 7.2 11Z M12.5 11.2 Q14 10.8 14.6 12 Q13.2 12.8 12.5 11.2Z M9 14.6 Q10.5 14 11.3 15.2 Q9.8 15.8 9 14.6Z" fill="#9a9a9a"/>
</svg>
<div class="t" style="left:325.40px;top:454px;font-size:15.5px;color:#222;letter-spacing:-0.546px;">Facebook</div>
<svg class="b" style="left:306px;top:455px" width="16" height="16" viewBox="0 0 16 16">
<rect width="16" height="16" fill="#3b5998"/><path d="M10.6 16 V9.6 H12.6 L12.9 7.4 H10.6 V6.1 Q10.6 5.2 11.6 5.2 H13 V3.2 Q12.2 3.1 11.2 3.1 Q8.3 3.1 8.3 6 V7.4 H6.4 V9.6 H8.3 V16Z" fill="#fff"/></svg>
<div class="t" style="left:325.40px;top:482px;font-size:15.5px;color:#222;letter-spacing:-0.154px;">Fortinet.Service</div>
<svg class="b" style="left:304px;top:481px" width="20" height="20" viewBox="0 0 20 20">
<path d="M10 2.2 L16.8 4.6 V9.8 Q16.8 15.2 10 17.8 Q3.2 15.2 3.2 9.8 V4.6Z" fill="#e4edf3" stroke="#b8cad6" stroke-width="0.8"/>
<path d="M10 3.8 L15.2 5.7 V9.8 Q15.2 14 10 16.2 Q4.8 14 4.8 9.8 V5.7Z" fill="#e3262d"/>
<rect x="6.9" y="6.6" width="6.2" height="5.4" fill="none" stroke="#fff" stroke-width="1"/>
<rect x="8.3" y="8.4" width="3.4" height="1.8" fill="#fff"/>
</svg>
<div class="t" style="left:326.40px;top:510px;font-size:15.5px;color:#222;letter-spacing:-0.582px;">YouTube</div>
<svg class="b" style="left:304px;top:509px" width="20" height="20" viewBox="0 0 20 20">
<path d="M5.5 3.3 H10.8 L14.5 6.6 V14.1 H5.5Z" fill="#fff" stroke="#5aaee8" stroke-width="1.1" stroke-linejoin="round"/>
<path d="M8 12.2 L11.5 8.4" stroke="#1f86d6" stroke-width="1.1"/>
<circle cx="8" cy="12.2" r="1.35" fill="#1f86d6"/><circle cx="11.5" cy="8.3" r="1.5" fill="#1f86d6"/>
</svg>
<div class="t" style="left:325.40px;top:538px;font-size:15.5px;color:#222;letter-spacing:-0.164px;">Firefox.Update</div>
<svg class="b" style="left:304px;top:537px" width="20" height="20" viewBox="0 0 20 20">
<defs><radialGradient id="fg" cx="0.6" cy="0.35" r="0.6"><stop offset="0" stop-color="#4fb3e8"/><stop offset="1" stop-color="#1d4f9a"/></radialGradient></defs>
<circle cx="10.2" cy="10.8" r="7.6" fill="#e8561f"/>
<circle cx="11" cy="9.6" r="5" fill="url(#fg)"/>
<path d="M2.8 9 Q3.6 15.6 10 17.6 Q15 17.6 17.6 12.4 Q15.6 15 11.2 15 Q6.6 14.6 6.2 10.4 Q7.4 12.6 9.2 12 Q6.6 10.6 7.6 7.6 Q4.8 7.4 4.2 5.6 Q3 7 2.8 9Z" fill="#f07a22"/>
<path d="M15.6 5 Q18.4 7.6 17.8 11.4 Q17 8.4 15.6 5Z" fill="#f5c533"/>
</svg>
<div class="b" style="left:298px;top:563px;width:210px;height:41px;background:#f3f3f3;border-top:1px solid #c8c8c8;box-sizing:border-box"></div>
<div class="b" style="left:343px;top:572px;width:120px;height:26px;background:#4a9658"></div>
<div class="t" style="left:383.95px;top:579px;font-size:15.5px;color:#fff;letter-spacing:-0.281px;">Apply</div>
</body></html>
